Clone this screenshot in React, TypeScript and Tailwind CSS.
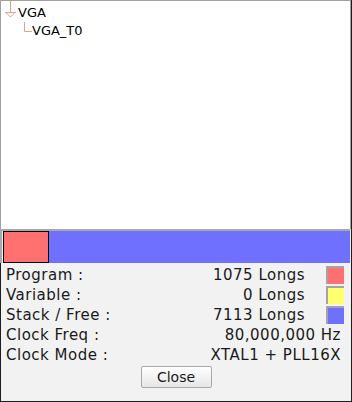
import React from "react";

interface MemRowProps {
  label: string;
  value: string;
  swatch?: string;
}

function MemRow({ label, value, swatch }: MemRowProps) {
  return <div className="flex h-[20px] items-center justify-between">
    <span className="pl-[5px]">{label}</span>
    {swatch ? (
      <div className="flex items-center pr-[7px]">
        <span>{value}</span>
        <div className={`ml-[21px] h-[18px] w-[18px] border-l-2 border-t-2 border-[#a4a4a4] ${swatch}`} />
      </div>
    ) : (
      <span className="pr-[10px]">{value}</span>
    )}
  </div>
}

export default function App() {
  return <div className="flex h-[402px] w-[352px] flex-col border-r border-b border-[#1e1e1e] bg-[#f2f2f2] font-['DejaVu_Sans',sans-serif]">
    {/* object tree */}
    <div className="relative h-[229px] shrink-0 border-l border-r border-t border-[#a0a0a0] bg-white pt-[3px] text-[13px] text-black">
      <svg className="absolute left-0 top-0" width="40" height="40" fill="none" stroke="#e6a08c" strokeWidth="1">
        <path d="M9.5 0 V12" />
        <path d="M4 11.5 H15" />
        <path d="M5 11.5 L9.5 16 L14 11.5" />
        <path d="M23.5 21 V30.5 H31" />
      </svg>
      <div className="flex h-[18px] items-center pl-[17px]">VGA</div>
      <div className="flex h-[17px] items-center pl-[31px]">VGA_T0</div>
    </div>

    {/* memory usage bar */}
    <div className="mr-[1px] flex h-[34px] shrink-0 border-l-2 border-t-2 border-[#a8a8a8]">
      <div className="ml-px h-full w-[46px] border border-black bg-[#ff7070]" />
      <div className="flex-1 bg-[#7070ff]" />
    </div>

    {/* stats */}
    <div className="flex flex-1 flex-col border-l border-[#1e1e1e] pt-[2px] text-[15px] tracking-[0.5px] text-[#1a1a1a]">
      <MemRow label="Program :" value="1075 Longs" swatch="bg-[#ff7070]" />
      <MemRow label="Variable :" value="0 Longs" swatch="bg-[#ffff70]" />
      <MemRow label="Stack / Free :" value="7113 Longs" swatch="bg-[#7070ff]" />
      <MemRow label="Clock Freq :" value="80,000,000 Hz" />
      <MemRow label="Clock Mode :" value="XTAL1 + PLL16X" />
      <div className="mt-px flex justify-center">
        <button className="h-[22px] w-[71px] rounded-[2px] border border-[#a8a8a8] bg-gradient-to-b from-white to-[#e6e6e6] text-[14px] tracking-normal text-[#1a1a1a]">
          Close
        </button>
      </div>
    </div>
  </div>
}
